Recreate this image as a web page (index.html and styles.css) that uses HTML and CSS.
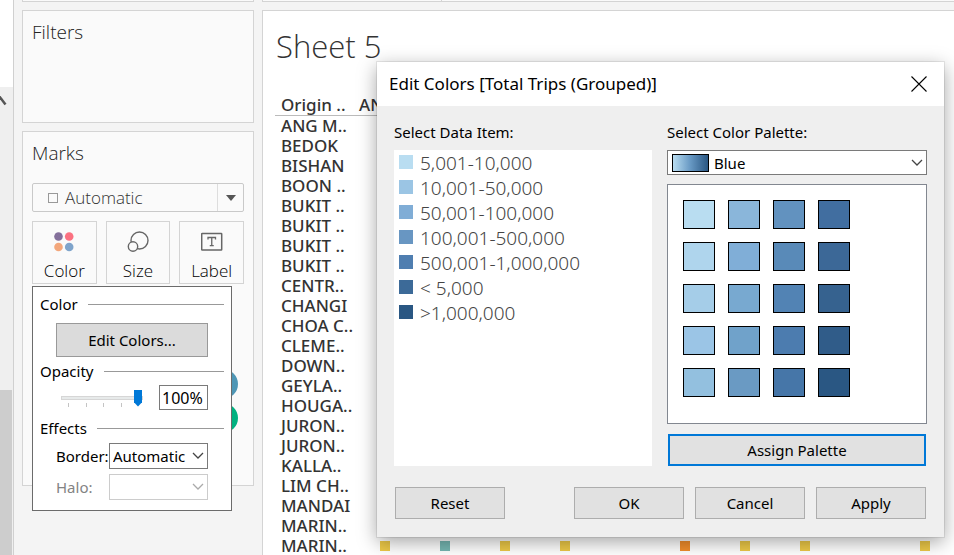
FILE: index.html
```html
<!DOCTYPE html>
<html lang="en">
<head>
<meta charset="utf-8">
<title>Sheet 5</title>
<link rel="stylesheet" href="styles.css">
</head>
<body>
<div class="app">
  <div class="edge">
    <div class="edge-blank"></div>
    <div class="edge-track">
      <svg width="7" height="12" viewBox="0 0 7 12"><path d="M-1 0l6.500 8.500" fill="none" stroke="#555" stroke-width="2.500"/></svg>
    </div>
    <div class="edge-thumb"></div>
  </div>

  <aside class="side">
    <div class="shelf-end"></div>
    <section class="card filters"><h2>Filters</h2></section>
    <section class="card marks">
      <h2>Marks</h2>
      <button class="mark-type" type="button">
        <span class="mark-square"></span>
        <span class="mark-name">Automatic</span>
        <span class="mark-arrow"><svg width="10" height="6" viewBox="0 0 10 6"><path d="M0 0h10L5 6z" fill="#555"/></svg></span>
      </button>
      <div class="mark-buttons">
        <button type="button">
          <svg width="22" height="22" viewBox="0 0 22 22"><circle cx="5.500" cy="5.500" r="4.300" fill="#84709b"/><circle cx="16.200" cy="5.500" r="4.300" fill="#fb7181"/><circle cx="5.500" cy="16" r="4.300" fill="#f3a77c"/><circle cx="16.200" cy="16" r="4.300" fill="#7fa4cb"/></svg>
          Color
        </button>
        <button type="button">
          <svg width="22" height="22" viewBox="0 0 22 22" fill="none" stroke="#666" stroke-width="1.400"><circle cx="12.500" cy="9.500" r="8.500"/><circle cx="6" cy="15.500" r="4.700" fill="#fafafa"/></svg>
          Size
        </button>
        <button type="button">
          <svg width="22" height="22" viewBox="0 0 22 22" fill="none" stroke="#666"><rect x="0.700" y="2.500" width="20" height="16.500" rx="0.500" stroke-width="1.500"/><path d="M7 8.500V6.500h7.500v2M10.750 6.500v8M8.750 14.700h4" stroke-width="1.300"/></svg>
          Label
        </button>
      </div>
      <div class="pills"><span class="pill blue"></span><span class="pill green"></span></div>
    </section>
  </aside>

  <main class="work">
    <div class="shelf-end split"></div>
    <section class="sheet">
      <h1>Sheet 5</h1>
      <table>
        <thead><tr><th class="name">Origin ..</th><th>AN..</th><th></th><th></th><th></th><th></th><th></th><th></th><th></th><th class="last">..</th></tr></thead>
        <tbody>
          <tr><th>ANG M..</th></tr>
          <tr><th>BEDOK</th></tr>
          <tr><th>BISHAN</th></tr>
          <tr><th>BOON ..</th></tr>
          <tr><th>BUKIT ..</th></tr>
          <tr><th>BUKIT ..</th></tr>
          <tr><th>BUKIT ..</th></tr>
          <tr><th>BUKIT ..</th></tr>
          <tr><th>CENTR..</th></tr>
          <tr><th>CHANGI</th></tr>
          <tr><th>CHOA C..</th></tr>
          <tr><th>CLEME..</th></tr>
          <tr><th>DOWN..</th></tr>
          <tr><th>GEYLA..</th></tr>
          <tr><th>HOUGA..</th></tr>
          <tr><th>JURON..</th></tr>
          <tr><th>JURON..</th></tr>
          <tr><th>KALLA..</th></tr>
          <tr><th>LIM CH..</th></tr>
          <tr><th>MANDAI</th></tr>
          <tr><th>MARIN..</th></tr>
          <tr><th>MARIN..</th><td><i class="y"></i></td><td><i class="t"></i></td><td><i class="y"></i></td><td><i class="y"></i></td><td></td><td><i class="o"></i></td><td><i class="y"></i></td><td><i class="y"></i></td><td></td><td><i class="y"></i></td></tr>
        </tbody>
      </table>
    </section>
  </main>
</div>

<div class="popup">
  <h3>Color</h3>
  <button class="edit" type="button">Edit Colors...</button>
  <h3>Opacity</h3>
  <div class="opacity">
    <div class="slider">
      <svg width="84" height="4" viewBox="0 0 84 4"><path d="M7.500 0v4M25.500 0v4M42.500 0v4M60.500 0v4" stroke="#c4c4c4"/></svg>
      <input type="range" min="0" max="100" value="100" aria-label="Opacity">
    </div>
    <input class="percent" type="text" value="100%" aria-label="Opacity percent">
  </div>
  <h3>Effects</h3>
  <div class="effect">
    <label for="border">Border:</label>
    <div class="combo"><select id="border"><option>Automatic</option></select><svg width="12" height="8" viewBox="0 0 12 8"><path d="M1 1l5 5 5-5" fill="none" stroke="#444" stroke-width="1.300"/></svg></div>
  </div>
  <div class="effect off">
    <label for="halo">Halo:</label>
    <div class="combo"><select id="halo" disabled><option></option></select><svg width="12" height="8" viewBox="0 0 12 8"><path d="M1 1l5 5 5-5" fill="none" stroke="#aaa" stroke-width="1.300"/></svg></div>
  </div>
</div>

<div class="dialog" role="dialog" aria-labelledby="dlg-title">
  <header>
    <span id="dlg-title">Edit Colors [Total Trips (Grouped)]</span>
    <button class="close" type="button" aria-label="Close"><svg width="16" height="16" viewBox="0 0 16 16"><path d="M0.500 0.500l15 15M15.500 0.500l-15 15" stroke="#000" stroke-width="1.100"/></svg></button>
  </header>
  <div class="panes">
    <div class="pane">
      <div class="caption">Select Data Item:</div>
      <ul class="items">
        <li><i class="c1"></i>5,001-10,000</li>
        <li><i class="c2"></i>10,001-50,000</li>
        <li><i class="c3"></i>50,001-100,000</li>
        <li><i class="c4"></i>100,001-500,000</li>
        <li><i class="c5"></i>500,001-1,000,000</li>
        <li><i class="c6"></i>&lt; 5,000</li>
        <li><i class="c7"></i>&gt;1,000,000</li>
      </ul>
    </div>
    <div class="pane">
      <label class="caption" for="palette">Select Color Palette:</label>
      <div class="combo wide"><select id="palette"><option>Blue</option></select><svg width="12" height="8" viewBox="0 0 12 8"><path d="M1 1l5 5 5-5" fill="none" stroke="#444" stroke-width="1.300"/></svg></div>
      <div class="swatches">
        <i style="background:#b9ddf1"></i><i style="background:#afd5ed"></i><i style="background:#a5cde8"></i><i style="background:#9bc5e6"></i><i style="background:#93c0df"></i>
        <i style="background:#8ab6da"></i><i style="background:#80aed7"></i><i style="background:#78a9d0"></i><i style="background:#70a2ca"></i><i style="background:#6a9ac3"></i>
        <i style="background:#6292bf"></i><i style="background:#598ab8"></i><i style="background:#5283b4"></i><i style="background:#4c7caf"></i><i style="background:#4676a8"></i>
        <i style="background:#416ea0"></i><i style="background:#3c6897"></i><i style="background:#36628f"></i><i style="background:#305c89"></i><i style="background:#2a5783"></i>
      </div>
      <button class="btn assign" type="button">Assign Palette</button>
    </div>
  </div>
  <footer>
    <button class="btn reset" type="button">Reset</button>
    <button class="btn" type="button">OK</button>
    <button class="btn" type="button">Cancel</button>
    <button class="btn" type="button">Apply</button>
  </footer>
</div>
</body>
</html>
```
FILE: styles.css
```css
* { box-sizing: border-box; }
body {
  margin: 0;
  height: 100vh;
  overflow: hidden;
  position: relative;
  background: #f4f4f4;
  color: #000;
  font: 15px/20px "Noto Sans", "Open Sans", sans-serif;
}
h1, h2, h3, ul { margin: 0; padding: 0; }
button, input, select { font: inherit; color: inherit; margin: 0; }
svg { display: block; }

.app { display: flex; height: 100vh; }

.edge {
  flex: none;
  width: 14px;
  display: flex;
  flex-direction: column;
  border-right: 1px solid #d0d0d0;
  background: #efefef;
}
.edge-blank { height: 87px; background: #fff; }
.edge-track { height: 303px; padding-top: 9px; }
.edge-thumb { flex: 1; width: 12px; background: #cdcdcd; }

.side {
  flex: none;
  width: 240px;
  padding-left: 8px;
}
.shelf-end { height: 2px; background: #fafafa; border: 1px solid #d4d4d4; border-top: 0; margin-bottom: 8px; }
.card { background: #fafafa; border: 1px solid #d4d4d4; }
.card h2 { font: 300 19px/24px "Open Sans", sans-serif; color: #222; padding: 9px 9px 0; }
.filters { height: 113px; margin-bottom: 8px; }
.marks { height: 355px; }

.mark-type {
  display: flex;
  align-items: center;
  width: calc(100% - 18px);
  height: 29px;
  margin: 18px 9px 9px;
  padding: 0;
  border: 1px solid #c9c9c9;
  border-radius: 2px;
  background: #fafafa;
}
.mark-square { width: 10px; height: 10px; margin: 0 7px 0 15px; border: 1px solid #999; }
.mark-name { flex: 1; text-align: left; color: #333; font: 300 17px/24px "Open Sans", sans-serif; }
.mark-arrow { display: flex; align-items: center; justify-content: center; width: 26px; height: 100%; border-left: 1px solid #ddd; }

.mark-buttons { display: grid; grid-template-columns: repeat(3, 1fr); gap: 9px; margin: 0 9px; }
.mark-buttons button {
  display: flex;
  flex-direction: column;
  align-items: center;
  gap: 6px;
  height: 63px;
  padding: 9px 0 0;
  border: 1px solid #d4d4d4;
  background: #fafafa;
  font: 300 17px/24px "Open Sans", sans-serif;
}
.pills { display: flex; flex-direction: column; align-items: flex-end; gap: 4px; padding: 85px 15px 0; }
.pill { width: 30px; height: 30px; border-radius: 50%; }
.blue { background: #4e96b5; }
.green { background: #00b180; }

.work { flex: 1; min-width: 0; padding-left: 8px; display: flex; flex-direction: column; }
.work .shelf-end { flex: none; border-right: 0; padding-left: 178px; }
.split::before { content: ""; display: block; width: 1px; height: 1px; background: #d4d4d4; }
.sheet {
  flex: 1;
  min-height: 0;
  overflow: hidden;
  background: #fff;
  border: 1px solid #d4d4d4;
  border-width: 1px 0 0 1px;
  padding-left: 12px;
}
.sheet h1 { font: 300 31px/40px "Open Sans", sans-serif; color: #333; padding: 15px 0 29px 1px; }
table { width: 680px; table-layout: fixed; border-collapse: collapse; color: #333; }
th, td { height: 20px; padding: 0; line-height: 20px; }
th { font-weight: 500; font-size: 17px; text-align: left; padding-left: 6px; white-space: nowrap; }
thead th { border-bottom: 1px solid #bbb; padding-left: 4px; }
thead .name { width: 80px; padding-left: 6px; }
thead .last { text-align: right; padding-right: 8px; }
td i { display: block; width: 10px; height: 10px; margin: 0 auto; }
.y { background: #edc948; }
.t { background: #76b7b2; }
.o { background: #f28e2b; }

.popup {
  position: absolute;
  left: 32px;
  top: 286px;
  width: 200px;
  border: 1px solid #6b6b6b;
  background: #fff;
  padding: 7px 7px 10px;
}
.popup h3 { display: flex; align-items: center; gap: 10px; font-size: 15px; font-weight: 400; line-height: 20px; }
.popup h3::after { content: ""; flex: 1; height: 1px; background: #999; }
.edit {
  display: block;
  width: 152px;
  height: 34px;
  margin: 9px 16px 4px;
  padding: 0;
  border: 1px solid #999;
  background: #dbdbdb;
}
.opacity { display: flex; justify-content: space-between; padding: 4px 16px 8px 21px; }
.slider { display: grid; width: 84px; height: 25px; }
.slider > * { grid-area: 1 / 1; }
.slider svg { margin-top: 18px; }
.slider input { appearance: none; width: 84px; height: 25px; padding: 0 2px 0 0; background: none; }
.slider input::-webkit-slider-runnable-track { height: 4px; background: #e7eaea; border: 1px solid #d6d6d6; }
.slider input::-webkit-slider-thumb {
  appearance: none;
  width: 8px;
  height: 17px;
  margin-top: -7px;
  background: #0078d7;
  clip-path: polygon(0 0, 100% 0, 100% 75%, 50% 100%, 0 75%);
}
.percent { width: 49px; height: 25px; padding: 0 2px; border: 1px solid #7a7a7a; background: #fff; font-size: 16px; }
.effect { display: flex; align-items: center; padding: 0 16px; margin-top: 5px; }
.effect label { width: 53px; white-space: nowrap; }
.effect .combo { flex: 1; }
.off { color: #838383; }

.combo { display: grid; align-items: center; min-width: 0; }
.combo > * { grid-area: 1 / 1; }
.combo select {
  appearance: none;
  width: 100%;
  height: 26px;
  padding: 0 3px;
  border: 1px solid #7a7a7a;
  border-radius: 0;
  background: #fff;
}
.combo select:disabled { border-color: #ccc; opacity: 1; }
.combo svg { justify-self: end; margin-right: 4px; pointer-events: none; }

.dialog {
  position: absolute;
  left: 377px;
  top: 62px;
  width: 567px;
  background: #efefef;
  box-shadow: 0 0 0 1px rgba(0, 0, 0, 0.08), 0 5px 18px rgba(0, 0, 0, 0.36);
}
.dialog header { display: flex; align-items: center; justify-content: space-between; height: 44px; padding: 0 17px 0 12px; background: #fff; font-size: 17px; }
.close { padding: 0; border: 0; background: none; }
.panes { display: grid; grid-template-columns: 258fr 260fr; gap: 15px; padding: 16px 17px 0; }
.pane { display: flex; flex-direction: column; min-width: 0; }
.caption { height: 28px; }
.items { flex: 1; background: #fff; list-style: none; color: #444; font: 300 19px/27px "Noto Sans", sans-serif; }
.items li { display: flex; gap: 7px; height: 25px; padding-left: 5px; }
.items i { width: 14px; height: 14px; margin-top: 5px; }
.c1 { background: #b9ddf1; }
.c2 { background: #9bc5e4; }
.c3 { background: #80add6; }
.c4 { background: #6896c2; }
.c5 { background: #4f7eb0; }
.c6 { background: #3c6a98; }
.c7 { background: #2a5783; }
.wide select {
  height: 25px;
  padding-left: 46px;
  background:
    linear-gradient(90deg, #b9ddf1, #6798c3 50%, #2a5783) 5px 4px / 35px 16px no-repeat,
    linear-gradient(#000, #000) 4px 3px / 37px 18px no-repeat,
    #fff;
}
.swatches {
  display: grid;
  grid-auto-flow: column;
  grid-template-rows: repeat(5, 29px);
  grid-auto-columns: 32px;
  gap: 13px;
  height: 240px;
  margin: 9px 0 10px;
  padding: 15px;
  border: 1px solid #828790;
  background: #fff;
}
.swatches i { border: 1px solid #000; }
.btn { width: 110px; height: 32px; padding: 0; border: 1px solid #adadad; background: #e1e1e1; }
.assign { width: auto; margin: 0 1px; border: 2px solid #0078d7; }
.dialog footer { display: flex; gap: 11px; padding: 21px 18px 18px; }
.reset { margin-right: auto; }
```
